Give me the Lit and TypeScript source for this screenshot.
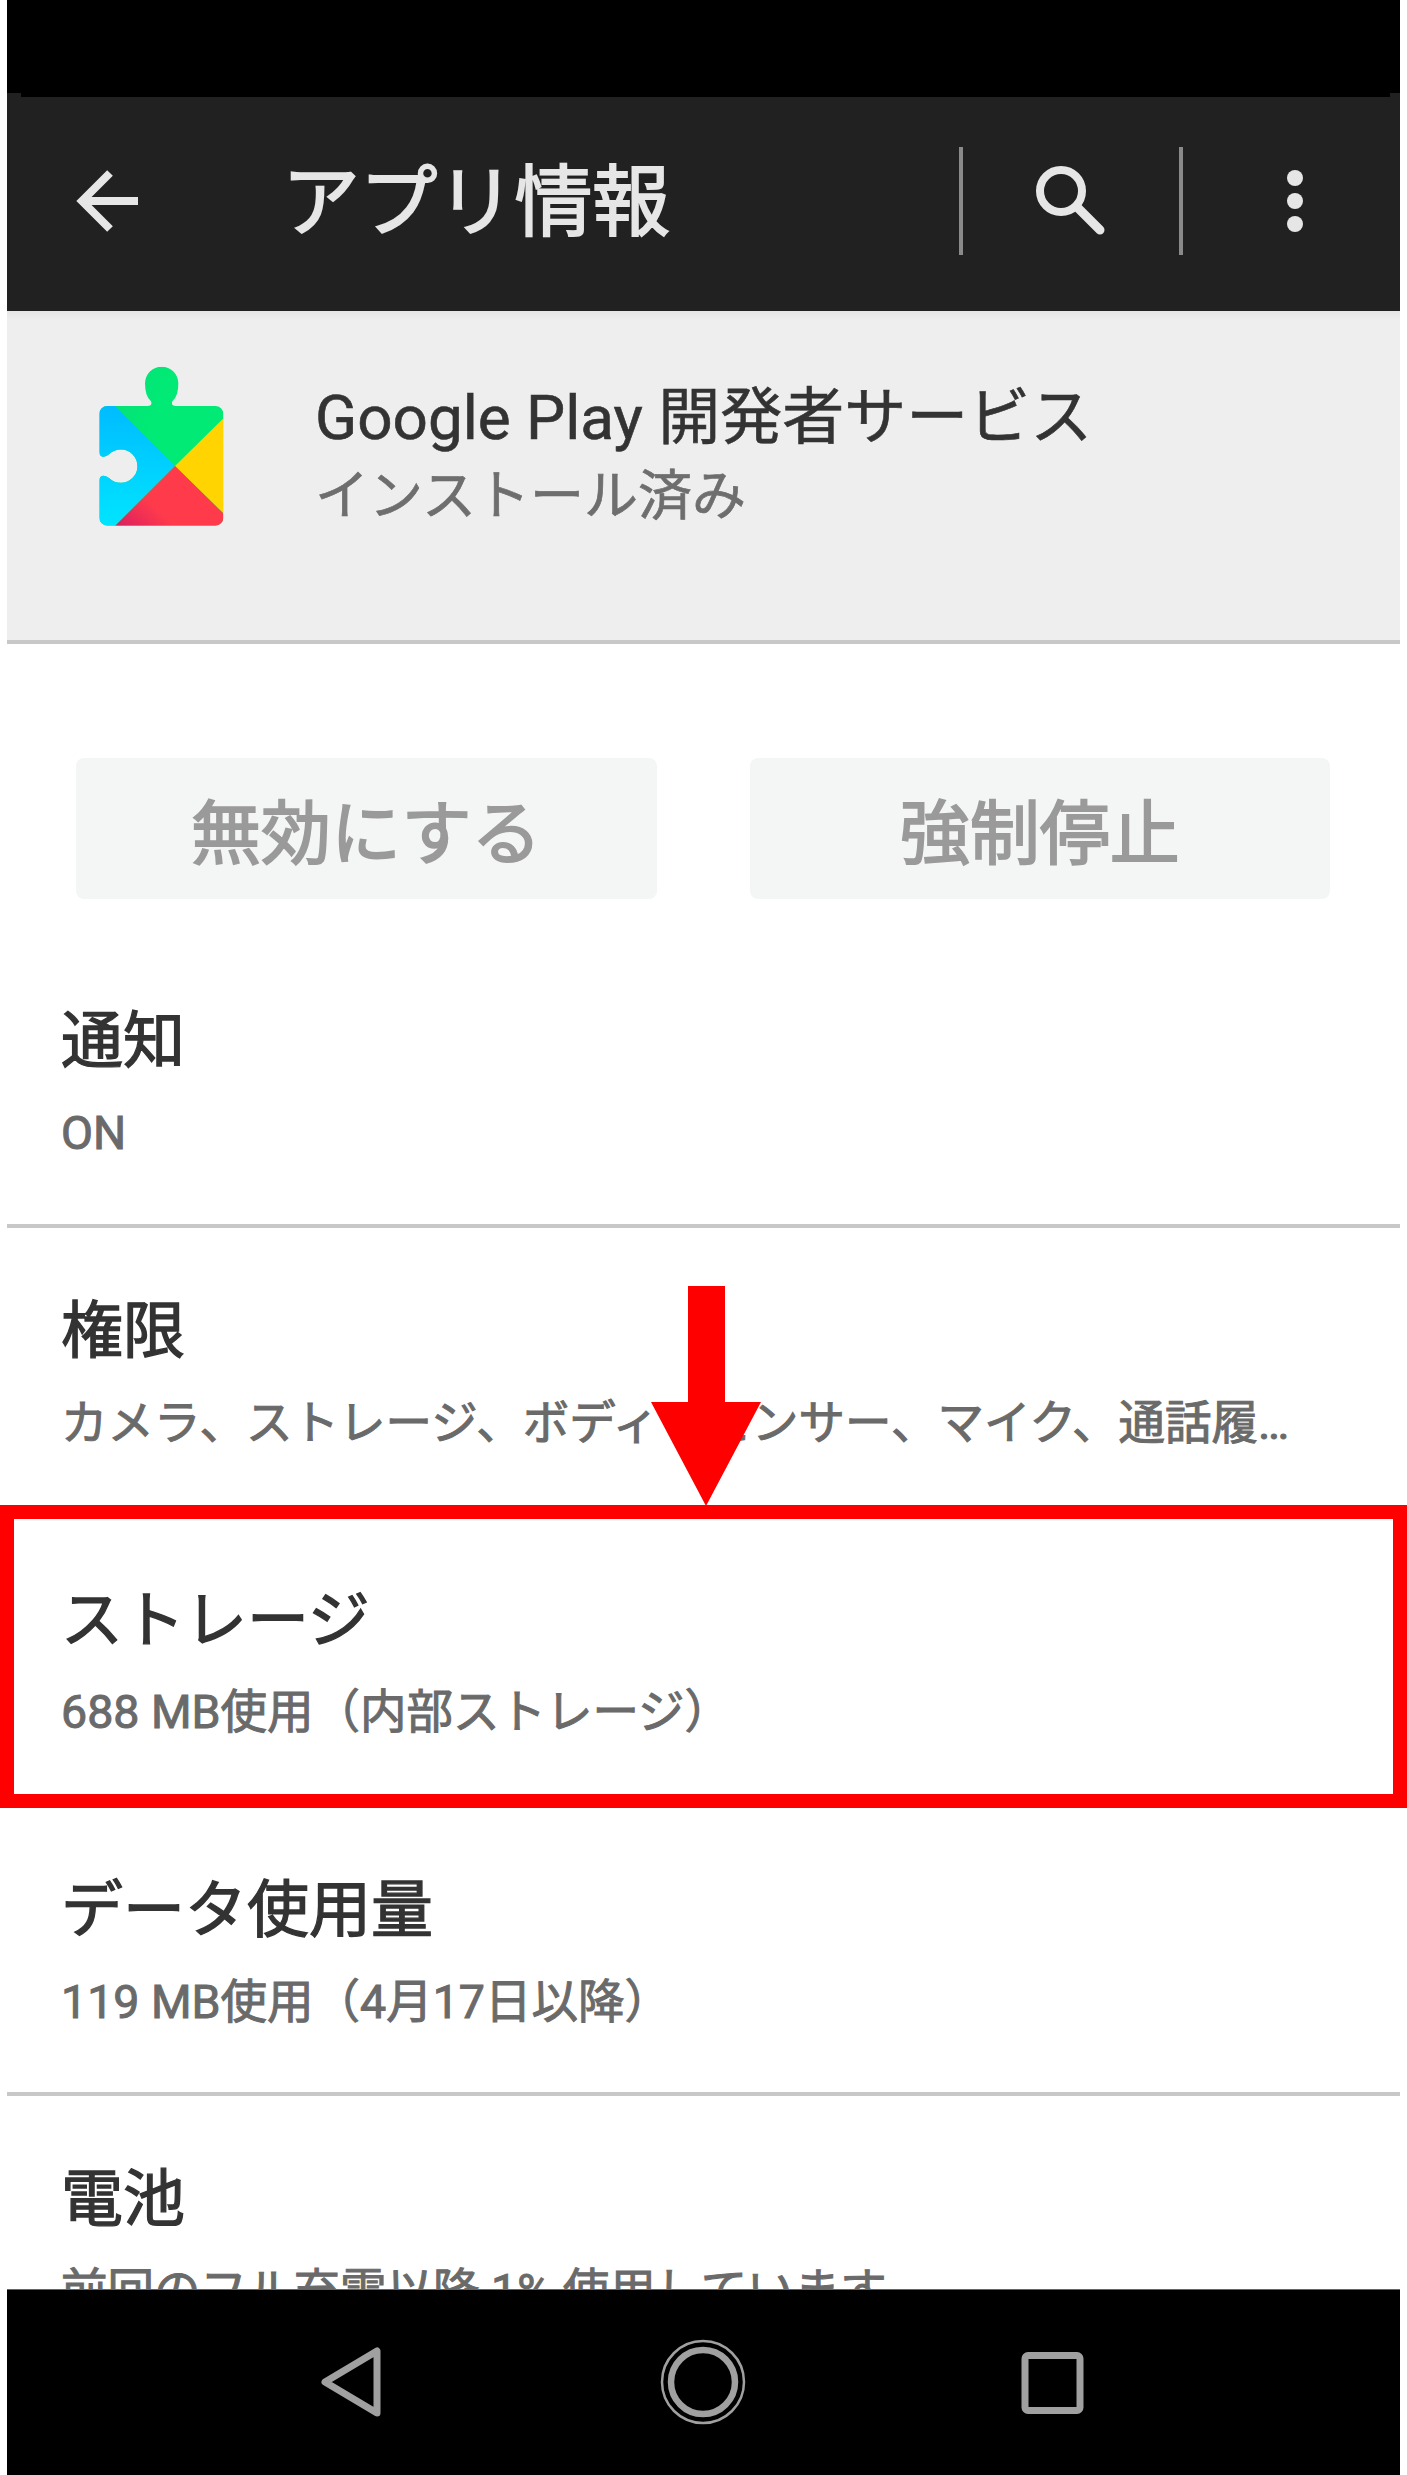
import { LitElement, html, css, svg } from 'lit';
import { customElement } from 'lit/decorators.js';

interface Row {
  title: string;
  sub: string;
}

const ROWS: Row[] = [
  { title: '通知', sub: 'ON' },
  { title: '権限', sub: 'カメラ、ストレージ、ボディ　センサー、マイク、通話履…' },
  { title: 'ストレージ', sub: '688 MB使用（内部ストレージ）' },
  { title: 'データ使用量', sub: '119 MB使用（4月17日以降）' },
  { title: '電池', sub: '前回のフル充電以降 1% 使用しています' },
];

// puzzle piece outline, in the 600 unit box the logo was measured in
const PIECE =
  'M118 222a24 24 0 0 1 24-24H262q16 0 11-14q-18-14-18-54a50 50 0 0 1 100 0q0 40-18 54q-5 14 11 14H466a24 24 0 0 1 24 24V533a24 24 0 0 1-24 24H142a24 24 0 0 1-24-24V422q0-15 13-15q8 0 17 8A50 50 0 1 0 148 342q-9 8-17 8q-13 0-13-15Z';

const playLogo = svg`
  <defs>
    <clipPath id="piece"><path d=${PIECE}></path></clipPath>
    <linearGradient id="blue" x1="0" y1="0" x2="0" y2="1">
      <stop offset="0" stop-color="#00b4ff"></stop>
      <stop offset="1" stop-color="#00e5ff"></stop>
    </linearGradient>
    <linearGradient id="red" x1="0" y1="1" x2="1" y2="0.4">
      <stop offset="0" stop-color="#d81e62"></stop>
      <stop offset="0.4" stop-color="#ff3a4b"></stop>
    </linearGradient>
    <linearGradient id="green" x1="0" y1="0" x2="1" y2="0.5">
      <stop offset="0" stop-color="#0bd97c"></stop>
      <stop offset="0.5" stop-color="#00ea75"></stop>
    </linearGradient>
  </defs>
  <g clip-path="url(#piece)">
    <rect x="100" y="60" width="400" height="510" fill="url(#green)"></rect>
    <polygon points="100,133 165,198 345,378 165,558 100,558" fill="url(#blue)"></polygon>
    <polygon points="500,225 345,378 500,530" fill="#ffd400"></polygon>
    <polygon points="165,558 345,378 500,530 500,558" fill="url(#red)"></polygon>
  </g>
`;

@customElement('app-root')
export class AppRoot extends LitElement {
  static styles = css`
    :host {
      display: block;
      font-family: Roboto, "Noto Sans CJK JP", sans-serif;
    }
    .screen {
      position: relative;
      display: flex;
      flex-direction: column;
      height: 2475px;
      padding: 0 7px;
      box-sizing: border-box;
      background: #fff;
      overflow: hidden;
    }
    .status {
      height: 97px;
      flex: none;
      background: #000;
    }
    .toolbar {
      position: relative;
      flex: none;
      display: flex;
      align-items: center;
      height: 214px;
      background: #212121;
      color: #e6e6e6;
    }
    .tab {
      position: absolute;
      top: -4px;
      width: 14px;
      height: 4px;
      background: #212121;
    }
    .tab.l { left: 0; }
    .tab.r { right: 0; width: 10px; }
    .back {
      width: 70px;
      height: 70px;
      margin-left: 66px;
      margin-top: -6px;
      flex: none;
    }
    .toolbar h1 {
      margin: 0 0 0 139px;
      font-size: 78px;
      font-weight: 400;
      line-height: 100px;
      letter-spacing: -0.5px;
      -webkit-text-stroke: 1.8px currentColor;
      white-space: nowrap;
      flex: 1;
    }
    .sep {
      width: 4px;
      height: 108px;
      margin-top: -6px;
      background: #8a8a8a;
      flex: none;
    }
    .search {
      width: 216px;
      height: 108px;
      margin-top: -6px;
      flex: none;
    }
    .more {
      width: 217px;
      height: 108px;
      margin-top: -6px;
      flex: none;
    }
    .band {
      flex: none;
      display: flex;
      align-items: flex-start;
      height: 329px;
      background: linear-gradient(#e6e6e6, #eee 8px);
      border-bottom: 4px solid #c8c8c8;
    }
    .logo {
      width: 200px;
      height: 200px;
      margin: 29px 0 0 53px;
      flex: none;
    }
    .names {
      margin: 69px 0 0 55px;
    }
    .names .app {
      font-size: 62px;
      line-height: 76px;
      color: #333;
      -webkit-text-stroke: 0.6px currentColor;
      white-space: nowrap;
    }
    .names .state {
      margin-top: 5px;
      font-size: 54px;
      line-height: 72px;
      color: #6e6e6e;
      -webkit-text-stroke: 0.7px currentColor;
      white-space: nowrap;
    }
    .buttons {
      flex: none;
      display: flex;
      gap: 93px;
      padding: 114px 70px 0 69px;
    }
    .btn {
      flex: 1;
      height: 141px;
      display: flex;
      align-items: center;
      justify-content: center;
      background: #f4f6f5;
      border-radius: 8px;
      font-size: 70px;
      color: #9a9a9a;
      -webkit-text-stroke: 1.8px currentColor;
    }
    .list {
      flex: 1;
      min-height: 0;
      overflow: hidden;
      margin-top: 39px;
    }
    .row {
      box-sizing: border-box;
      height: 289.5px;
      padding: 59px 40px 0 54px;
      border-bottom: 4px solid #c8c8c8;
    }
    .row .title {
      font-size: 62px;
      line-height: 90px;
      color: #333;
      -webkit-text-stroke: 1.3px currentColor;
      white-space: nowrap;
    }
    .row .sub {
      font-size: 46.5px;
      line-height: 64px;
      margin-top: 14px;
      color: #6a6a6a;
      -webkit-text-stroke: 1px currentColor;
      white-space: nowrap;
    }
    .nav {
      flex: none;
      height: 186px;
      box-sizing: border-box;
      border-top: 1px solid #666;
      background: #000;
    }
    .nav svg {
      display: block;
      width: 1393px;
      height: 185px;
    }
    .callout {
      position: absolute;
      left: 0;
      top: 1505px;
      width: 100%;
      height: 303px;
      box-sizing: border-box;
      border: 14px solid #f00;
    }
    .arrow {
      position: absolute;
      left: 651px;
      top: 1286px;
      width: 110px;
      height: 220px;
    }
  `;

  render() {
    return html`
      <div class="screen">
        <div class="status"></div>
        <div class="toolbar">
          <span class="tab l"></span>
          <span class="tab r"></span>
          <svg class="back" viewBox="0 0 70 70" fill="none" stroke="#e6e6e6" stroke-width="8">
            <path d="M65 35H9M37 7 9 35l28 28"></path>
          </svg>
          <h1>アプリ情報</h1>
          <span class="sep"></span>
          <svg class="search" viewBox="0 0 216 108" fill="none" stroke="#e6e6e6" stroke-width="8">
            <circle cx="98" cy="44" r="21"></circle>
            <path d="M115 61l22 22" stroke-linecap="round" stroke-width="9"></path>
          </svg>
          <span class="sep"></span>
          <svg class="more" viewBox="0 0 217 108" fill="#e6e6e6">
            <circle cx="112" cy="31" r="8"></circle>
            <circle cx="112" cy="54" r="8"></circle>
            <circle cx="112" cy="77" r="8"></circle>
          </svg>
        </div>
        <div class="band">
          <svg class="logo" viewBox="0 0 600 600">${playLogo}</svg>
          <div class="names">
            <div class="app">Google Play 開発者サービス</div>
            <div class="state">インストール済み</div>
          </div>
        </div>
        <div class="buttons">
          <div class="btn">無効にする</div>
          <div class="btn">強制停止</div>
        </div>
        <div class="list">
          ${ROWS.map(
            (r) => html`
              <div class="row">
                <div class="title">${r.title}</div>
                <div class="sub">${r.sub}</div>
              </div>
            `
          )}
        </div>
        <div class="nav">
          <svg viewBox="0 0 1393 185" fill="none" stroke="#a0a0a0">
            <path d="M370 61V123L318 92Z" stroke-width="7" stroke-linejoin="round"></path>
            <circle cx="696" cy="92" r="41" stroke-width="2.5"></circle>
            <circle cx="696" cy="92" r="32" stroke-width="6.5"></circle>
            <rect x="1018" y="65.5" width="55" height="55" rx="3" stroke-width="7"></rect>
          </svg>
        </div>
        <div class="callout"></div>
        <svg class="arrow" viewBox="0 0 110 220" fill="#f00">
          <path d="M37 0H74V116H110L55 220 0 116H37Z"></path>
        </svg>
      </div>
    `;
  }
}
